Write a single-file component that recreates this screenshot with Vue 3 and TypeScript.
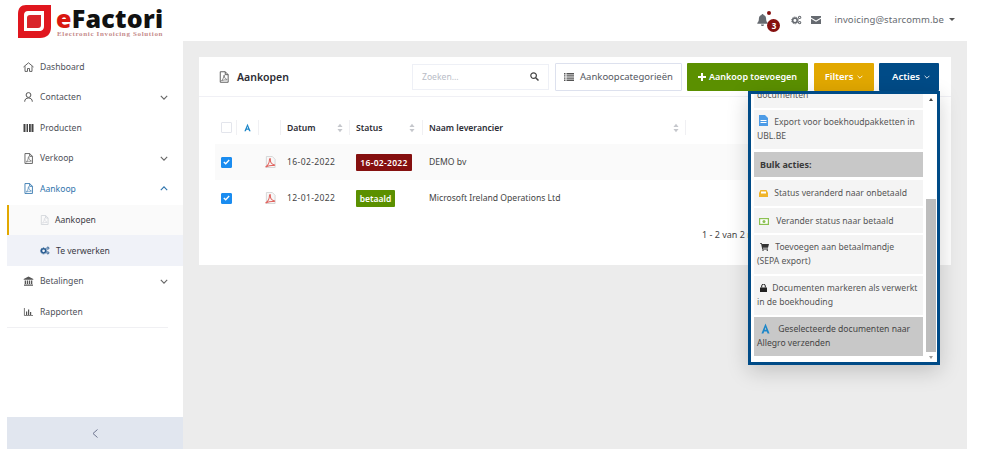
<script setup lang="ts">
const rows = [
  { date: '16-02-2022', badge: '16-02-2022', badgeClass: 'late', name: 'DEMO bv', alt: true },
  { date: '12-01-2022', badge: 'betaald', badgeClass: 'paid', name: 'Microsoft Ireland Operations Ltd', alt: false },
]
const heads = [
  { label: 'Datum', cls: 'c-date' },
  { label: 'Status', cls: 'c-status' },
  { label: 'Naam leverancier', cls: 'c-name' },
]
</script>

<template>
  <div class="app">
    <svg width="0" height="0" class="defs">
      <symbol id="doc" viewBox="0 0 12 14">
        <path d="M1.500 .7h6l3.500 3.500v9.100h-9.500z M7.500 .7v3.500h3.500" fill="none" stroke="currentColor" stroke-width="1.100" />
        <path d="M3.200 11c1.400-1 2.500-3.300 2.600-5.800 .1-1 .9-.6.700.4-.3 2 1.100 3.800 2.600 4.100 1 .2.800 1-.2.800-1.900-.2-3.800 0-5.300.8-.6.300-.9 0-.4-.3z" fill="none" stroke="currentColor" stroke-width=".8" />
      </symbol>
      <symbol id="cogs" viewBox="0 0 14 12">
        <circle cx="5" cy="6.500" r="2.900" fill="none" stroke="currentColor" stroke-width="2" />
        <circle cx="5" cy="6.500" r="4.300" fill="none" stroke="currentColor" stroke-width="1.200" stroke-dasharray="1.500 1.200" />
        <circle cx="11" cy="2.700" r="1.500" fill="none" stroke="currentColor" stroke-width="1.300" />
        <circle cx="11" cy="9.300" r="1.500" fill="none" stroke="currentColor" stroke-width="1.300" />
      </symbol>
      <symbol id="allegro" viewBox="0 0 10 12">
        <path d="M5 .5 9.500 11.500H7.300L6.500 9.300H3.500L2.700 11.500H.5zM5 4.500 4.100 7.400h1.800z" fill="#1d87c9" fill-rule="evenodd" />
      </symbol>
      <symbol id="acro" viewBox="0 0 12 13">
        <path d="M1.500 .5h6.500l3 3v9h-9.500z" fill="#f7f7f7" stroke="#d4d4d4" />
        <path d="M1 11.600c2-1.200 3.800-4.300 3.900-8 .1-1.300 1.200-1 1 .4-.4 2.700 1.600 5 3.900 5.400 1.300.2 1 1-.2.900-2.700-.3-5.500.1-7.600 1.300-.8.500-1.400.3-1 0z" fill="none" stroke="#e0645f" stroke-width="1.100" />
      </symbol>
      <symbol id="sort" viewBox="0 0 7 11">
        <path d="M3.500 .5 6.500 4.300H.5zM3.500 10.500.5 6.700h6z" fill="#c5c7cc" />
      </symbol>
      <symbol id="chev" viewBox="0 0 10 6">
        <path d="M1 1l4 4 4-4" fill="none" stroke="currentColor" stroke-width="1.400" />
      </symbol>
    </svg>

    <header class="top">
      <div class="logo">
        <svg class="logo-mark" width="33" height="33" viewBox="0 0 33 33">
          <path d="M8 0H33V22C33 29 29 33 22 33H0V9C0 3 3 0 8 0z" fill="#e0161e" />
          <path d="M10 6H26V21C26 24.500 24.500 26 21 26H6V10C6 7.500 7.500 6 10 6z" fill="#fff" />
          <path d="M12 10H23V20C23 22 22 23 20 23H9V13C9 11 10 10 12 10z" fill="#d9252b" />
        </svg>
        <div class="logo-text">
          <div class="logo-name"><span class="logo-e">e</span>Factori</div>
          <div class="logo-sub">Electronic Invoicing Solution</div>
        </div>
      </div>
      <div class="top-right">
        <span class="bell">
          <svg width="11" height="12" viewBox="0 0 11 12"><path d="M5.500 0c.6 0 1 .4 1 .9 1.700.4 2.600 1.900 2.600 3.700 0 2.400.5 3.300 1.600 4.400v.7H.3V9c1.100-1.100 1.600-2 1.600-4.400 0-1.800.9-3.300 2.600-3.700 0-.5.400-.9 1-.9zM4 10.500h3c0 1-.7 1.500-1.500 1.500S4 11.500 4 10.500z" fill="#666a70" /></svg>
          <i class="dot"></i>
          <b class="count">3</b>
        </span>
        <svg class="t-cogs" width="11" height="10"><use href="#cogs" /></svg>
        <svg class="t-mail" width="10" height="8" viewBox="0 0 10 8"><path d="M0 0h10v1.500L5 4.500 0 1.500zM0 2.800 5 5.800 10 2.800V8H0z" fill="#666a70" /></svg>
        <span class="email">invoicing@starcomm.be</span>
        <i class="caret"></i>
      </div>
    </header>

    <div class="body">
      <aside class="side">
        <nav class="nav">
          <a class="item">
            <svg class="ic" width="11" height="10" viewBox="0 0 11 10"><path d="M.5 5 5.500.8 10.500 5M2 4.200V9.400h2.500V6.500h2V9.400H9V4.200" fill="none" stroke="#555" stroke-width=".9" /></svg>
            <span>Dashboard</span>
          </a>
          <a class="item">
            <svg class="ic" width="9" height="10" viewBox="0 0 9 10"><circle cx="4.500" cy="3" r="2.400" fill="none" stroke="#555" stroke-width="1" /><path d="M.7 9.700c0-2.500 1.500-3.700 3.800-3.700s3.800 1.200 3.800 3.700" fill="none" stroke="#555" stroke-width="1" /></svg>
            <span>Contacten</span>
            <svg class="chev" width="8" height="5"><use href="#chev" /></svg>
          </a>
          <a class="item">
            <svg class="ic" width="10" height="8" viewBox="0 0 10 8"><path d="M0 0h2v8H0zM3 0h1.500v8H3zM5.500 0h1.800v8H5.500zM8 0h2v8H8z" fill="#444" /></svg>
            <span>Producten</span>
          </a>
          <a class="item">
            <svg class="ic doc-grey" width="9" height="11"><use href="#doc" /></svg>
            <span>Verkoop</span>
            <svg class="chev" width="8" height="5"><use href="#chev" /></svg>
          </a>
          <a class="item active">
            <svg class="ic" width="9" height="11"><use href="#doc" /></svg>
            <span>Aankoop</span>
            <svg class="chev up" width="8" height="5"><use href="#chev" /></svg>
          </a>
          <a class="sub current">
            <svg class="sub-ic doc-pale" width="9" height="10"><use href="#doc" /></svg>
            <span>Aankopen</span>
          </a>
          <a class="sub tinted">
            <svg class="sub-ic cogs-blue" width="10" height="9"><use href="#cogs" /></svg>
            <span>Te verwerken</span>
          </a>
          <a class="item">
            <svg class="ic" width="10" height="10" viewBox="0 0 10 10"><path d="M5 .5 9.800 3v.8H.2V3zM1.200 4.500h1.300V8H1.200zM3.300 4.500h1.300V8H3.300zM5.400 4.500h1.300V8H5.400zM7.500 4.500h1.300V8H7.500zM.5 8.500h9v1.200h-9z" fill="#555" /></svg>
            <span>Betalingen</span>
            <svg class="chev" width="8" height="5"><use href="#chev" /></svg>
          </a>
          <a class="item last">
            <svg class="ic" width="9" height="8" viewBox="0 0 9 8"><path d="M.4 0v7.600H9" fill="none" stroke="#555" stroke-width=".8" /><path d="M2 3.500h1.200V7H2zM4 1.500h1.200V7H4zM6 4h1.200v3H6z" fill="#555" /></svg>
            <span>Rapporten</span>
          </a>
        </nav>
        <div class="collapse">
          <svg width="6" height="9" viewBox="0 0 6 9"><path d="M5.500.5 1 4.500l4.500 4" fill="none" stroke="#6f7690" stroke-width="1" /></svg>
        </div>
      </aside>

      <main class="content">
        <section class="card">
          <div class="card-head">
            <svg class="title-ic" width="10" height="12"><use href="#doc" /></svg>
            <h1>Aankopen</h1>
            <div class="search">
              <span>Zoeken...</span>
              <svg width="9" height="9" viewBox="0 0 9 9"><circle cx="3.600" cy="3.600" r="2.800" fill="none" stroke="#444" stroke-width="1.200" /><path d="M5.700 5.700 8.500 8.500" stroke="#444" stroke-width="1.500" /></svg>
            </div>
            <button class="btn outline">
              <svg width="10" height="8" viewBox="0 0 10 8"><path d="M0 0h1.500v1.400H0zM2.500 0H10v1.400H2.500zM0 2.200h1.500v1.400H0zM2.500 2.200H10v1.400H2.500zM0 4.400h1.500v1.400H0zM2.500 4.400H10v1.400H2.500zM0 6.600h1.500V8H0zM2.500 6.600H10V8H2.500z" fill="#555" /></svg>
              Aankoopcategorieën
            </button>
            <button class="btn green">
              <svg width="8" height="8" viewBox="0 0 8 8"><path d="M3 0h2v3h3v2H5v3H3V5H0V3h3z" fill="#fff" /></svg>
              Aankoop toevoegen
            </button>
            <button class="btn amber">Filters <svg width="6" height="4"><use href="#chev" /></svg></button>
            <div class="acties-wrap">
              <button class="btn navy">Acties <svg width="6" height="4"><use href="#chev" /></svg></button>
              <div class="dropdown">
                <div class="list">
                  <div class="di clipped">documenten</div>
                  <div class="di two">
                    <svg class="di-ic i-file" width="9" height="11" viewBox="0 0 9 11"><path d="M0 0h6l3 3v8H0z" fill="#4d9be6" /><path d="M1.500 5h6v1h-6zM1.500 7h6v1h-6z" fill="#fff" /></svg>
                    Export voor boekhoudpakketten in<br />UBL.BE
                  </div>
                  <div class="di head-row">Bulk acties:</div>
                  <div class="di">
                    <svg class="di-ic i-file" width="9" height="7" viewBox="0 0 9 7"><path d="M1.500 0h6L9 3v4H0V3z" fill="#f0b429" /><path d="M2 1.500h5v2H2z" fill="#fff" /></svg>
                    Status veranderd naar onbetaald
                  </div>
                  <div class="di short">
                    <svg class="di-ic i-cash" width="10" height="7" viewBox="0 0 10 7"><path d="M0 0h10v7H0z" fill="#8cc152" /><path d="M1.200 1.200h7.600v4.600H1.200z" fill="#fff" /><circle cx="5" cy="3.500" r="1.500" fill="#8cc152" /></svg>
                    Verander status naar betaald
                  </div>
                  <div class="di two">
                    <svg class="di-ic i-cart" width="9" height="8" viewBox="0 0 9 8"><path d="M0 0h1.700l.3 1H9L8 4.800H2.800L3 5.600h5v.8H2.300L1.100.8H0z" fill="#333" /><circle cx="3" cy="7.300" r=".7" fill="#333" /><circle cx="7.300" cy="7.300" r=".7" fill="#333" /></svg>
                    Toevoegen aan betaalmandje<br />(SEPA export)
                  </div>
                  <div class="di two">
                    <svg class="di-ic i-lock" width="7" height="8" viewBox="0 0 7 8"><path d="M0 3.500h7V8H0z" fill="#222" /><path d="M1.700 3.500V2a1.800 1.800 0 0 1 3.600 0v1.500" fill="none" stroke="#222" /></svg>
                    Documenten markeren als verwerkt<br />in de boekhouding
                  </div>
                  <div class="di two hl">
                    <svg class="di-ic i-alle" width="9" height="11"><use href="#allegro" /></svg>
                    Geselecteerde documenten naar<br />Allegro verzenden
                  </div>
                </div>
                <div class="scroll">
                  <i class="arrow up"></i>
                  <div class="track"><div class="thumb"></div></div>
                  <i class="arrow down"></i>
                </div>
              </div>
            </div>
          </div>

          <div class="table">
            <div class="tr th">
              <div class="cell c-check"><i class="box"></i></div>
              <div class="cell c-a"><svg width="7" height="9"><use href="#allegro" /></svg></div>
              <div class="cell c-pdf"></div>
              <div v-for="h in heads" :key="h.label" class="cell" :class="h.cls">
                <span>{{ h.label }}</span>
                <svg width="6" height="10"><use href="#sort" /></svg>
              </div>
            </div>
            <div v-for="r in rows" :key="r.date" class="tr" :class="{ alt: r.alt }">
              <div class="cell c-check">
                <i class="box on">
                  <svg width="7" height="6" viewBox="0 0 7 6"><path d="M.8 3 2.700 4.800 6.200 1" fill="none" stroke="#fff" stroke-width="1.300" /></svg>
                </i>
              </div>
              <div class="cell c-a"></div>
              <div class="cell c-pdf"><svg width="11" height="12"><use href="#acro" /></svg></div>
              <div class="cell c-date">{{ r.date }}</div>
              <div class="cell c-status"><span class="badge" :class="r.badgeClass">{{ r.badge }}</span></div>
              <div class="cell c-name">{{ r.name }}</div>
            </div>
          </div>
          <div class="pager">1 - 2 van 2 resultaten</div>
        </section>
      </main>
    </div>
  </div>
</template>

<style scoped>
.defs { position: absolute; }
.app {
  width: 960px;
  height: 449px;
  margin-left: 7px;
  display: flex;
  flex-direction: column;
  font-family: "Noto Sans", sans-serif;
  font-size: 8.600px;
  color: #444;
  overflow: hidden;
}
.top {
  height: 41px;
  flex: none;
  background: #fff;
  display: flex;
  justify-content: space-between;
  align-items: flex-start;
}
.logo { display: flex; align-items: flex-start; margin: 5px 0 0 11px; gap: 5px; }
.logo-mark { flex: none; }
.logo-text { display: flex; flex-direction: column; }
.logo-name {
  font-family: "Open Sans", sans-serif;
  font-weight: 800;
  font-size: 25px;
  line-height: 26px;
  color: #111;
  letter-spacing: .25px;
}
.logo-e { color: #d9160f; }
.logo-sub {
  font-family: "Liberation Serif", serif;
  font-weight: 700;
  font-size: 7px;
  line-height: 7px;
  letter-spacing: .66px;
  color: #c58a8a;
  white-space: nowrap;
  margin-left: 1px;
}
.top-right { display: flex; align-items: center; margin-right: 12px; margin-top: 13px; }
.bell { position: relative; display: flex; margin-right: 23px; }
.dot { position: absolute; left: 10px; top: -3px; width: 4px; height: 4px; border-radius: 50%; background: #85100f; }
.count {
  position: absolute;
  left: 10px;
  top: 5px;
  width: 13px;
  height: 13px;
  border-radius: 50%;
  background: #85100f;
  color: #fff;
  font-size: 8px;
  line-height: 13px;
  text-align: center;
}
.t-cogs { color: #666a70; margin-right: 9px; }
.t-mail { margin-right: 13px; }
.email { font-size: 9.500px; letter-spacing: .1px; color: #666a70; }
.caret {
  margin-left: 5px;
  width: 0;
  height: 0;
  border: 3px solid transparent;
  border-top: 3px solid #555;
  border-bottom: 0;
}

.body { flex: 1; display: flex; min-height: 0; }
.side { width: 176px; flex: none; background: #fff; display: flex; flex-direction: column; justify-content: space-between; }
.nav { padding-top: 10.500px; }
.item {
  height: 30.500px;
  display: flex;
  align-items: center;
  padding: 0 15px 0 16px;
  color: #4d5058;
}
.ic { width: 11px; margin-right: 6px; flex: none; color: #555; }
.item.active { color: #2f74ad; margin-bottom: 1px; }
.item.active .ic { color: #2f74ad; }
.item.last { border-bottom: 1px solid #f0f0f3; margin: 1px 15px 0 0; padding-right: 0; width: 161px; box-sizing: border-box; }
.chev { margin-left: auto; color: #666; }
.chev.up { transform: rotate(180deg); color: #2f74ad; }
.sub {
  display: flex;
  align-items: center;
  padding-left: 33px;
  color: #3a3a44;
}
.sub-ic { margin-right: 6px; flex: none; }
.current { background: #fafafa; box-shadow: inset 2px 0 0 #e2a800; height: 30px; }
.tinted { background: #f0f2f8; height: 31px; }
.doc-pale { color: #cfd2d8; }
.cogs-blue { color: #24598f; }
.collapse {
  height: 32px;
  background: #e1e6ef;
  display: flex;
  align-items: center;
  justify-content: center;
}

.content { flex: 1; background: #ececec; padding: 16px; min-width: 0; }
.card { background: #fff; height: 208px; box-sizing: border-box; }
.card-head {
  height: 40px;
  box-sizing: border-box;
  border-bottom: 1px solid #f0f0f5;
  display: flex;
  align-items: center;
  padding: 0 12px 0 20px;
}
.title-ic { color: #555; margin-right: 8px; flex: none; }
h1 { font-size: 10.500px; font-weight: 600; color: #2c2c34; margin: 0; flex: 1; }
.search {
  width: 137px;
  height: 26px;
  box-sizing: border-box;
  border: 1px solid #eef0f6;
  display: flex;
  align-items: center;
  justify-content: space-between;
  padding: 0 9px;
  color: #b8bcc6;
  margin-right: 6px;
}
.btn {
  height: 28px;
  box-sizing: border-box;
  border: 0;
  border-radius: 1px;
  font-family: inherit;
  font-size: 9.500px;
  display: flex;
  align-items: center;
  justify-content: center;
  gap: 4px;
  padding: 0;
  color: #fff;
  font-weight: 600;
}
.outline { width: 127px; background: #fff; border: 1px solid #dde1ee; color: #55585f; font-weight: 400; margin-right: 5px; gap: 6px; }
.green { width: 121px; background: #5b9000; margin-right: 6px; font-size: 9px; gap: 3px; }
.amber { width: 60px; background: #e2a800; margin-right: 5px; }
.navy { width: 60px; background: #004b87; padding-left: 4px; }
.acties-wrap { position: relative; }
.dropdown {
  position: absolute;
  top: 28px;
  right: -1px;
  width: 192px;
  height: 274px;
  box-sizing: border-box;
  background: #fff;
  border: 3px solid #004b87;
  box-shadow: 0 6px 20px rgba(0, 0, 0, .18);
  display: flex;
  z-index: 5;
  padding: 0 2px 0 3px;
  overflow: hidden;
}
.list { width: 169px; flex: none; display: flex; flex-direction: column; gap: 2px; }
.di {
  background: #f4f4f4;
  color: #555;
  line-height: 14px;
  padding: 6px 2px 6px 3px;
  box-sizing: border-box;
  height: 26px;
  flex: none;
  white-space: nowrap;
}
.di.short { height: 25px; }
.di.two { height: 39px; padding-top: 5px; }
.clipped { height: 14px; padding-top: 0; padding-bottom: 0; line-height: 2px; overflow: hidden; }
.head-row { background: #c8c8c8; font-weight: 700; color: #3a3a3a; height: 25px; padding: 6px; margin: 1px 0; font-size: 9px; }
.hl { background: #c8c8c8; color: #444; }
.di-ic { vertical-align: -1px; }
.i-file { margin: 0 4px 0 2px; }
.i-cash { margin: 0 5px 0 2px; }
.i-cart { margin: 0 4px 0 3px; }
.i-lock { margin: 0 3px 0 3px; }
.i-alle { margin: 0 6px 0 4px; vertical-align: -2px; }
.scroll { width: 10px; margin-left: 3px; flex: none; display: flex; flex-direction: column; height: 100%; }
.track { flex: 1; position: relative; }
.thumb { position: absolute; left: 0; right: 0; top: 94px; bottom: 0; background: #bdbdbd; }
.arrow { display: block; width: 0; margin: 4px auto; border: 2.500px solid transparent; }
.arrow.up { border-top: 0; border-bottom: 3px solid #444; }
.arrow.down { border-bottom: 0; border-top: 3px solid #999; margin-bottom: 3px; }

.table { padding: 16px 16px 0; }
.tr { display: flex; height: 36px; align-items: center; }
.th { height: 29px; margin-bottom: 2px; font-weight: 600; color: #2c2c34; }
.alt { background: #fafafa; }
.cell { display: flex; align-items: center; box-sizing: border-box; height: 100%; }
.th .cell { height: 15px; border-right: 1px solid #f0f0f3; }
.c-check { width: 22px; padding-left: 6px; }
.c-a, .c-pdf { width: 22px; justify-content: center; }
.c-date { width: 69px; padding-left: 6px; padding-right: 6px; justify-content: space-between; letter-spacing: .35px; }
.th .c-date { letter-spacing: 0; }
.c-status { width: 73px; padding-left: 6px; padding-right: 7px; justify-content: space-between; }
.c-name { width: 263px; padding-left: 6px; padding-right: 6px; justify-content: space-between; }
.box { display: flex; align-items: center; justify-content: center; width: 11px; height: 11px; box-sizing: border-box; border: 1px solid #e3e5ec; border-radius: 1px; background: #fff; }
.box.on { background: #1a8cf0; border-color: #1a8cf0; }
.badge { color: #fff; font-weight: 600; font-size: 8.500px; height: 17px; line-height: 17px; border-radius: 1px; text-align: center; }
.late { background: #85100f; width: 56px; letter-spacing: .3px; }
.paid { background: #5b9000; width: 39px; }
.pager { margin-top: 12px; padding-left: 503px; color: #444; white-space: nowrap; font-size: 9px; }
</style>

<style>
html, body { background: #fff; }
</style>
